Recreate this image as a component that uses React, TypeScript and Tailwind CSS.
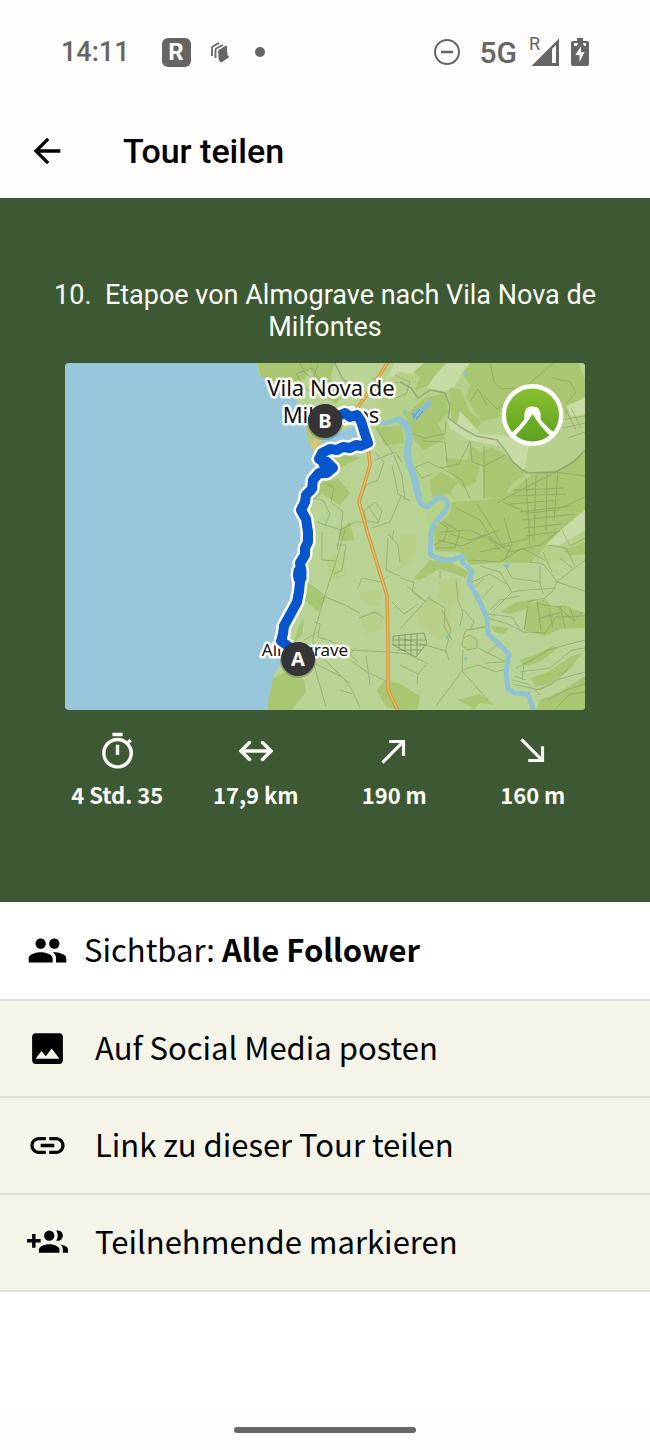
import { ReactNode } from "react";
import { MdArrowBack, MdCallMade, MdImage, MdLink, MdOutlineTimer, MdPeople } from "react-icons/md";

const STATS: { label: string; icon: ReactNode }[] = [
  { label: "4 Std. 35", icon: <MdOutlineTimer size={41} /> },
  { label: "17,9 km", icon: <DistanceIcon /> },
  { label: "190 m", icon: <MdCallMade size={38} /> },
  { label: "160 m", icon: <MdCallMade size={38} className="rotate-90" /> },
];

const ACTIONS: { label: string; icon: ReactNode }[] = [
  { label: "Auf Social Media posten", icon: <MdImage size={41} /> },
  { label: "Link zu dieser Tour teilen", icon: <MdLink size={41} /> },
  { label: "Teilnehmende markieren", icon: <TagPeopleIcon /> },
];

const COAST =
  "M257 363 L260 376 L268 381 L283 386 L296 398 L300 412 L306 425 L307 440 L312 449 L318 455 L316 476 L304 497 L300 511 L305 522 L305 545 L299 566 L298 592 L286 618 L279 640 L282 660 L274 675 L270 692 L267 710 L585 710 L585 363 Z";

const RIVER =
  "M376 422 L388 423 L398 419 L404 422 L409 436 L406 456 L411 470 L416 480 L419 500 Q424 510 430 505 L437 498 Q444 496 448 504 Q448 509 440 517 Q430 525 431 540 L430 554 Q438 561 452 560 L462 556 L463 563 L472 571 L469 582 L480 602 L487 618 L488 634 L497 642 L509 654 L506 672 L508 689 L514 693 L528 694 L534 711";

const HIGHWAY =
  "M389 360 L375 383 L358 407 L364 425 L368 445 L370 465 L359 502 L368 534 L387 596 L388 640 L388 690 L398 711";

const ROUTE =
  "M325 420 L338 416 L345 413 L350 417 L357 415 L361 421 L365 434 L368 443 L361 446 L356 445 L350 448 L343 447 L337 450 L330 449 L322 453 L319 459 L327 462 L333 468 L327 473 L319 473 L313 480 L312 489 L306 495 L305 502 L301 510 L306 519 L308 532 L308 542 L305 548 L305 555 L300 563 L301 569 L298 575 L300 582 L299 592 L297 602 L290 615 L284 626 L283 634 L281 641 L288 646 L297 659";

// woodland
const WOODS = [
  "M257 363 L262 380 L284 384 L305 379 L310 368 L306 363 Z",
  "M307 363 L335 363 L330 378 L345 392 L336 404 L322 395 Z",
  "M424 363 L445 363 L434 378 L428 386 L415 390 L420 378 L414 372 Z",
  "M463 374 L470 363 L578 363 L585 380 L585 396 L574 406 L552 430 L524 433 L502 417 L482 421 L466 398 L470 386 Z",
  "M449 388 L460 389 L470 412 L482 421 L475 432 L462 420 L452 424 Z",
  "M405 415 L425 398 L446 393 L448 412 L438 424 L446 438 L424 450 L412 438 Z",
  "M430 480 L441 472 L458 482 L450 492 L456 500 L448 494 L432 498 Z",
  "M445 458 L468 460 L470 445 L480 452 L492 447 L510 458 L528 472 L512 484 L503 497 L484 498 L482 458 L476 482 L463 488 L448 470 Z",
  "M452 502 L485 500 L510 492 L534 473 L560 469 L585 452 L585 510 L562 529 L546 545 L530 563 L502 562 L470 565 L460 552 L435 551 L434 528 L450 514 Z",
  "M414 578 L430 560 L452 563 L469 572 L466 578 L455 574 L440 569 L420 580 Z",
  "M500 612 L516 602 L535 599 L528 608 L510 614 Z",
  "M527 607 L545 598 L552 607 L563 605 L585 613 L585 628 L560 629 L545 636 L524 630 Z",
  "M491 626 L509 628 L504 634 L494 632 Z",
  "M519 660 L535 655 L553 646 L558 648 L540 662 L526 666 Z",
  "M530 678 L548 672 L572 656 L583 653 L566 672 L548 684 L536 687 Z",
  "M536 710 L540 700 L560 692 L585 676 L585 710 Z",
  "M400 684 L420 696 L418 709 L400 710 L386 707 L377 690 L385 680 Z",
  "M457 700 L480 694 L495 705 L480 703 L474 710 L466 704 Z",
  "M270 680 L290 670 L304 680 L306 692 L292 710 L267 710 Z",
  "M306 582 L326 598 L318 612 L303 598 Z",
  "M299 625 L304 618 L302 635 L294 642 Z",
  "M317 484 L338 478 L350 493 L340 505 L322 494 L314 500 Z",
  "M338 531 L350 522 L354 540 L340 541 Z",
  "M318 458 L345 455 L362 457 L345 465 L335 474 Z",
  "M376 427 L402 426 L404 443 L385 446 Z",
  "M563 550 L585 542 L585 554 L570 556 Z",
];

// open ground
const MEADOWS = [
  "M395 363 L424 363 L411 374 L399 372 L384 382 Z",
  "M426 388 L438 372 L448 363 L470 363 L462 373 L455 386 L444 391 Z",
  "M446 416 L462 428 L470 434 L500 435 L530 441 L524 471 L510 458 L500 446 L468 440 L450 428 Z",
  "M460 411 L472 424 L480 432 L470 434 L457 426 Z",
  "M585 398 L566 406 L571 416 L585 414 Z",
  "M585 510 L562 529 L546 545 L560 545 L585 530 Z",
];

const FIELDS = [
  "M438 580 L458 578 L462 600 L450 609 L438 598 Z",
  "M416 610 L432 596 L450 612 L452 632 L440 640 L420 626 Z",
  "M326 560 L346 550 L346 575 L330 580 Z",
  "M360 592 L382 590 L380 606 L362 604 Z",
  "M400 535 L415 533 L416 556 L400 570 Z",
  "M464 638 L474 636 L478 645 L470 650 L462 646 Z",
  "M360 616 L380 610 L384 628 L366 634 Z",
];

const PATHS = [
  "M300 363 L304 372 L313 379 L318 364 M296 374 L312 368 L322 384 L308 391 Z",
  "M395 375 L410 382 L406 394 L396 398 M372 378 L390 384 L399 382",
  "M490 363 L494 382 L502 389 L524 388 L536 378 L553 363 M484 396 L497 409 L508 402 L524 397",
  "M470 402 L478 389 L487 405 M552 378 L570 382 L576 392 L566 404",
  "M566 410 L576 430 M571 408 L581 428 M560 420 L585 416 M563 428 L585 423 M568 438 L585 432",
  "M376 428 L394 455 L402 476 L405 500 M375 460 L395 452 L402 462",
  "M375 452 L384 462 L378 480 L366 485 L360 502",
  "M364 511 L375 502 L382 511 L378 523 L366 520 Z M368 506 L378 520",
  "M392 465 L398 494 L410 501 M401 496 L390 522 L372 528",
  "M322 480 L334 488 L331 502 L343 512 L341 530 L354 522 L368 522",
  "M310 498 L323 500 L330 514 L325 526 M317 522 L341 530 L337 550",
  "M413 468 L428 462 L440 468 L459 464 L466 450 L470 441 M413 466 L422 478 L432 474",
  "M446 420 L445 434 L424 438 L412 433 M422 441 L445 442 L447 462 M440 467 L462 480 L470 499",
  "M470 441 L472 462 L484 466 L505 455 M484 446 L484 498",
  "M497 503 L519 491 L556 472 L585 476 M503 502 L528 513 L556 510 L585 497",
  "M526 478 L530 545 M536 475 L534 542 M547 472 L546 530 M558 472 L554 520",
  "M514 490 L564 488 M512 496 L566 494 M510 504 L560 500 M520 512 L572 506 M522 520 L575 514 M524 528 L562 524 M526 536 L556 532",
  "M477 504 L485 516 L501 544 M456 508 L480 520 L499 550 M500 530 L470 540 L450 534 M504 518 L512 545 L505 558",
  "M437 520 L448 528 L444 540 L434 545 M444 522 L460 532 L455 548 L436 548",
  "M440 532 L470 530 L500 545 L530 538 M438 540 L462 546 L486 535 L510 552 L540 545 L560 530",
  "M470 560 L500 562 L522 548 L545 560 M480 552 L510 545",
  "M530 562 L543 564 L552 575 L557 582 L572 570 L585 560 M557 582 L585 591 M557 582 L552 592 L544 598 L527 602",
  "M543 552 L552 572 M548 545 L566 548 L575 566 M562 530 L570 546 L585 538 M560 558 L572 568",
  "M505 566 L512 578 L540 582 L543 594 M480 566 L500 572 L512 592 L494 610 M540 565 L540 584",
  "M472 582 L490 574 L506 584 M484 578 L474 588 M493 586 L482 598 M512 592 L526 590 L556 588",
  "M488 614 L512 617 L522 632 L545 633 L556 617 L585 616 M488 618 L508 624 L524 632 M490 610 L500 600 L520 596",
  "M528 606 L524 630 M537 600 L541 630 M549 608 L553 628 M560 606 L565 628 M570 608 L575 622",
  "M535 603 L558 607 L574 621 L582 612 M540 618 L562 612",
  "M430 596 L400 629 M428 598 L445 608 L444 626 L452 640 M407 586 L426 602 M400 578 L414 582 L412 592 L423 600",
  "M456 580 L458 600 L463 612 L460 626 M440 578 L440 570 M463 609 L474 622 L470 630 L485 626",
  "M463 638 L470 635 L477 640 L477 648 L468 650 L462 646 Z M463 650 L462 671 L436 706",
  "M463 638 L466 630 L486 627 M462 671 L488 700 M462 670 L478 665 L496 672 L508 668",
  "M478 648 L506 662 M487 654 L500 642 M400 638 L446 651 L449 660 M442 610 L451 630 L445 652",
  "M485 663 L504 662 M400 665 L418 674 L426 665 M418 674 L417 684",
  "M516 668 L532 660 L548 650 L566 645 L585 640 M520 672 L550 668 L572 650 L585 648 M512 684 L540 690 L556 680 L585 672",
  "M512 680 L528 684 L540 695 M514 676 L526 680 M524 664 L522 680 M536 690 L552 684 L574 664",
  "M548 700 L566 690 L585 684 M556 708 L570 694 L585 692",
  "M345 530 L337 558 L324 598 L313 637 L314 665 L326 707",
  "M336 545 L346 545 L342 570 L334 574 M322 532 L322 560 L335 561",
  "M309 584 L328 598 L345 605 L360 613 M359 618 L375 612 L384 618",
  "M314 622 L320 624 L318 637 L331 641 L350 650 L388 652",
  "M304 640 L318 632 M315 650 L330 665 L345 680 L352 690 L360 708 M316 664 L340 676 L350 683",
  "M350 660 L367 672 L388 682 M345 650 L358 662 M388 652 L408 654 L428 664",
  "M388 576 L381 582 L362 578 L358 588 M388 538 L386 570 L400 576 M392 602 L404 614 L418 604",
  "M346 658 L356 648 M340 690 L352 694 M366 655 L370 685",
  "M388 534 L398 545 L400 562 M394 530 L392 540",
];

function DistanceIcon() {
  return (
    <svg width="36" height="36" viewBox="0 0 36 36" fill="none" stroke="currentColor" strokeWidth="3.500" strokeLinecap="round">
      <path d="M3 18 H33" strokeLinecap="butt" />
      <path d="M11.500 9.500 L3 18 L11.500 26.500 M24.500 9.500 L33 18 L24.500 26.500" />
    </svg>
  );
}

function TagPeopleIcon() {
  return (
    <svg width="41" height="41" viewBox="0 0 24 24" fill="currentColor">
      <path d="M8 10H5V7H3v3H0v2h3v3h2v-3h3z" />
      <circle cx="13" cy="8" r="3" />
      <path d="M13 13c-2 0-6 1-6 3v2h12v-2c0-2-4-3-6-3z" />
      <path d="M18 11c1.660 0 2.990-1.340 2.990-3S19.660 5 18 5c-.32 0-.63.050-.91.140.57.810.9 1.790.9 2.860s-.34 2.040-.9 2.860c.28.090.59.140.91.140z" />
      <path d="M19.620 13.160c.83.730 1.380 1.660 1.380 2.840v2h3v-2c0-1.540-2.370-2.490-4.380-2.840z" />
    </svg>
  );
}

function Marker({ x, y, children }: { x: number; y: number; children: string }) {
  return (
    <g>
      <circle cx={x} cy={y + 1} r="18" fill="#000" opacity="0.2" />
      <circle cx={x} cy={y} r="17" fill="#353436" />
      <text x={x} y={y + 7} textAnchor="middle" fill="#fff" fontSize="20" fontWeight="700" fontFamily="Noto Sans, sans-serif">
        {children}
      </text>
    </g>
  );
}

function TourMap() {
  return (
    <svg viewBox="65 363 520 347" className="block w-4/5 rounded-sm" role="img" aria-label="Karte">
      <defs>
        <clipPath id="land">
          <path d={COAST} />
        </clipPath>
        <linearGradient id="logo" x1="0" y1="0" x2="0" y2="1">
          <stop offset="0" stopColor="#86c02f" />
          <stop offset="1" stopColor="#5ea11f" />
        </linearGradient>
      </defs>
      <rect x="65" y="363" width="520" height="347" fill="#98c7db" />
      <g clipPath="url(#land)">
        <path d={COAST} fill="#bad496" />
        <path d="M385 363 H585 V560 L500 565 L435 548 L424 510 L408 470 L372 425 Z" fill="#b6d189" />
        {FIELDS.map((d) => (
          <path key={d} d={d} fill="#b9cd80" opacity="0.6" />
        ))}
        {WOODS.map((d) => (
          <path key={d} d={d} fill="#a8c770" />
        ))}
        {MEADOWS.map((d) => (
          <path key={d} d={d} fill="#c7dca5" />
        ))}
        <path d="M300 410 L320 425 L330 436 L316 450 L305 440 Z" fill="#b1c981" />
        <path d="M311 444 L316 438 L319 442 L313 451 L308 456 Z" fill="#e3c271" />
        <g fill="none" stroke="#7d9160" strokeWidth="1" opacity="0.5">
          {PATHS.map((d) => (
            <path key={d} d={d} />
          ))}
        </g>
        <path
          d="M400 382 L411 388 L418 398 L430 390 L445 393 L450 406 L448 418 L462 428 L476 436 L497 440 L505 450 L513 462 L520 468 L527 473 L556 472 L574 462 L585 450 M335 363 L342 378 L356 390 L362 400"
          fill="none"
          stroke="#8a9670"
          strokeWidth="1.500"
          opacity="0.7"
        />
        <path
          d="M393 636 L424 633 L427 643 L416 657 L393 645 Z M393 640 H426 M393 645 H425 M397 650 H421 M399 635 V648 M405 634 V652 M411 634 V655 M417 634 V655"
          fill="none"
          stroke="#74875e"
          strokeWidth="1"
          opacity="0.7"
        />
        <path d="M316 452 L324 438 L345 430 L358 424 L364 436 L364 444 L330 450 Z" fill="#98c7db" />
        <path d={RIVER} fill="none" stroke="#8fc3d2" strokeWidth="5" strokeLinejoin="round" />
        <path d="M398 419 Q410 424 409 440 Q405 456 413 474 L419 498" fill="none" stroke="#8fc3d2" strokeWidth="7" />
        <path d="M411 415 L415 409 L420 408 L430 399 L432 404 L422 414 L414 422 Z" fill="#89bdd2" />
        <path d="M413 418 L420 409 M416 420 L423 411 M412 413 L418 418" stroke="#6394aa" strokeWidth="1" />
        <path d="M464 370 L466 375 L469 376 L464 376 Z M502 565 L509 564 L508 569 Z M445 637 L449 635 L447 640 Z M464 657 L468 658 L465 661 Z M403 409 L408 412 L404 415 Z" fill="#89bdd2" />
        <g fill="none" strokeLinejoin="round">
          <path d={HIGHWAY} stroke="#cf993f" strokeWidth="3.500" />
          <path d={HIGHWAY} stroke="#f0b761" strokeWidth="1.500" />
        </g>
      </g>
      <g fontFamily="Noto Sans, sans-serif" fill="#111" stroke="#fff" strokeWidth="5" strokeLinejoin="round" textAnchor="middle" paintOrder="stroke">
        <text x="331" y="396" fontSize="22">
          Vila Nova de
        </text>
        <text x="331" y="423" fontSize="22">
          Milfontes
        </text>
        <text x="305" y="656" fontSize="17">
          Almograve
        </text>
      </g>
      <g fill="none" strokeLinejoin="round" strokeLinecap="round">
        <path d={ROUTE} stroke="#fff" strokeWidth="15" />
        <path d="M300 571 V578 M325 464 L330 468" stroke="#fff" strokeWidth="18" />
        <path d={ROUTE} stroke="#0655cd" strokeWidth="10" />
        <path d="M300 571 V578 M325 464 L330 468" stroke="#0655cd" strokeWidth="13" />
      </g>
      <Marker x={325} y={421}>
        B
      </Marker>
      <Marker x={298} y={659}>
        A
      </Marker>
      <circle cx="532.500" cy="415" r="31" fill="#fff" />
      <circle cx="532.500" cy="415" r="26.500" fill="url(#logo)" />
      <path d="M511 433 Q519 427 524.500 419 Q523 406.500 532.500 406.500 Q542 406.500 540.500 419 Q546 427 555 433 L551 437 Q539 425 532.500 414 Q526 425 514 437 Z" fill="#fff" />
    </svg>
  );
}

function StatusBar() {
  return (
    <div className="flex h-[104px] items-center justify-between px-[61px] text-[#656563]">
      <div className="flex items-center">
        <span className="text-[27px] font-medium">14:11</span>
        <span className="ml-8 flex size-[29px] items-center justify-center rounded-md bg-[#656563] text-2xl font-bold text-[#fefdfb]">
          R
        </span>
        <svg width="18" height="21" viewBox="0 0 18 21" className="ml-5" fill="none" stroke="currentColor" strokeWidth="1.800">
          <path d="M1 14 V6 Q1 4.500 2.500 4 L8 1" />
          <path d="M4.500 16 V8 Q4.500 6.500 6 6 L12 3" />
          <path d="M8 9 L15 4.500 L15.500 13 L17 15 L10 19.500 L8.500 17 Z" fill="currentColor" strokeLinejoin="round" />
        </svg>
        <span className="ml-[26px] size-[10px] rounded-full bg-[#656563]" />
      </div>
      <div className="flex items-center">
        <svg width="26" height="26" viewBox="0 0 26 26" fill="none" stroke="currentColor" strokeWidth="2">
          <circle cx="13" cy="13" r="12" />
          <path d="M7 13 H19" strokeWidth="2.500" />
        </svg>
        <span className="ml-5 text-[30px] font-medium">5G</span>
        <span className="relative ml-3 h-[28px] w-[30px]">
          <span className="absolute -top-1 left-0 text-lg leading-5">R</span>
          <svg width="28" height="28" viewBox="0 0 28 28" className="absolute right-0">
            <path d="M0.500 28 L28 0.500 V28 Z M21 11 V25 H25 V7 Z" fill="currentColor" fillRule="evenodd" />
          </svg>
        </span>
        <svg width="18" height="30" viewBox="0 0 18 30" className="ml-3">
          <path d="M6 1 H12 V4 H16 Q18 4 18 6 V27 Q18 29 16 29 H2 Q0 29 0 27 V6 Q0 4 2 4 H6 Z" fill="currentColor" />
          <path d="M10 9 L4.500 18 H8.500 V25 L13.500 15 H10 Z M3 6 H7 L6 9 H3 Z M12 6 H15 V9 H13 Z" fill="#fefdfb" />
        </svg>
      </div>
    </div>
  );
}

export default function App() {
  return (
    <div className="flex min-h-screen flex-col bg-white font-[Roboto,sans-serif] text-black">
      <header className="bg-[#fefdfb]">
        <StatusBar />
        <div className="flex h-[94px] items-center gap-14 px-[27px]">
          <button aria-label="Zurück">
            <MdArrowBack size={40} />
          </button>
          <h1 className="text-[34px] font-medium">Tour teilen</h1>
        </div>
      </header>

      <section className="flex flex-col items-center bg-[#3d5933] pt-[81px] pb-[94px] text-[#fcfdf8]">
        <h2 className="px-10 text-center text-[27px] leading-8 whitespace-pre-wrap">
          {"10.  Etapoe von Almograve nach Vila Nova de Milfontes"}
        </h2>
        <div className="mt-5 flex w-full justify-center">
          <TourMap />
        </div>
        <ul className="mt-[19px] grid w-full grid-cols-4 px-12">
          {STATS.map((s) => (
            <li key={s.label} className="flex flex-col items-center">
              <span className="flex h-11 items-center">{s.icon}</span>
              <span className="mt-[7px] font-['Noto_Sans_CJK_SC',sans-serif] text-[22px] leading-7 font-bold">{s.label}</span>
            </li>
          ))}
        </ul>
      </section>

      <main className="font-['Noto_Sans_CJK_SC',sans-serif] text-[31px] leading-10">
        <button className="flex h-[99px] w-full items-center gap-4 border-b-2 border-[#dfe0db] px-[27px] text-left">
          <MdPeople size={41} className="shrink-0" />
          <span className="pb-1">
            Sichtbar: <b>Alle Follower</b>
          </span>
        </button>
        {ACTIONS.map((a) => (
          <button key={a.label} className="flex h-[97px] w-full items-center gap-[27px] border-b-2 border-[#dfe0db] bg-[#f4f4e9] px-[27px] text-left">
            <span className="shrink-0">{a.icon}</span>
            <span className="pb-1">{a.label}</span>
          </button>
        ))}
      </main>

      <div className="mt-auto flex h-10 items-center justify-center bg-[#fefdfb]">
        <span className="h-[6px] w-[182px] rounded-full bg-[#666664]" />
      </div>
    </div>
  );
}
